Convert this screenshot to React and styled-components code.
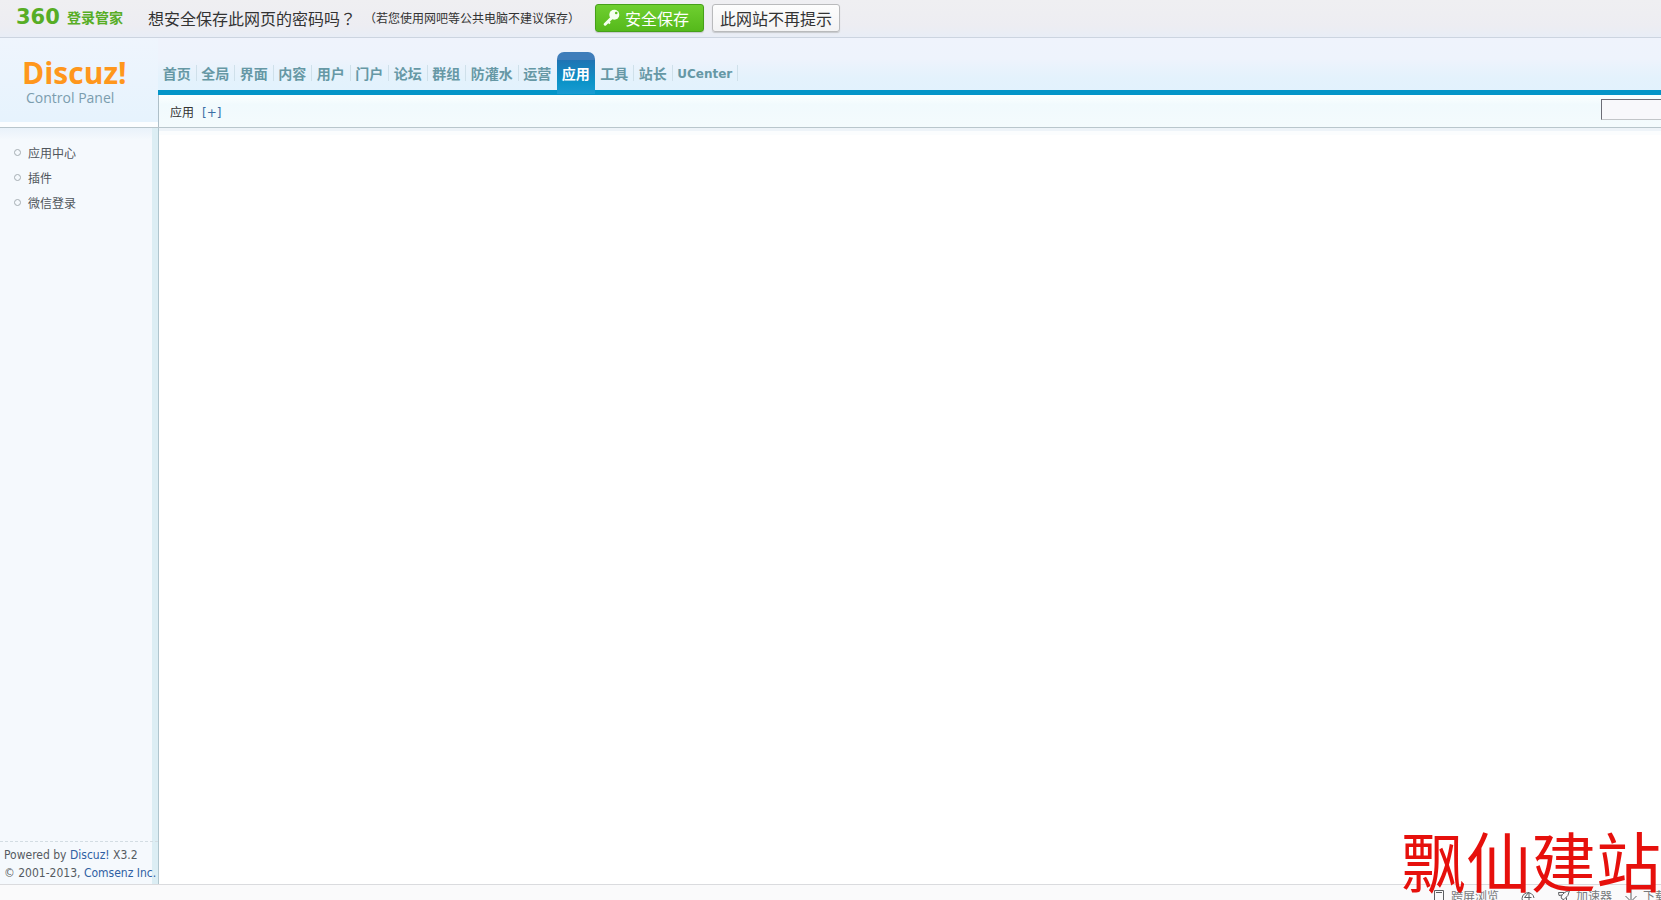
import React from "react";
import styled, { createGlobalStyle } from "styled-components";

const sans = `"DejaVu Sans", "Noto Sans CJK SC", sans-serif`;
const ui = `"DejaVu Sans Condensed", "Noto Sans", "Noto Sans CJK SC", sans-serif`;

const GlobalStyle = createGlobalStyle`
  * { box-sizing: border-box; }
  body {
    margin: 0;
    background: #fff;
    color: #4a4f55;
    font: 12px/18px ${ui};
    overflow: hidden;
  }
  a { text-decoration: none; color: inherit; }
  ul { list-style: none; margin: 0; padding: 0; }
  p { margin: 0; }
`;

const Page = styled.div`
  display: flex;
  flex-direction: column;
  height: 100vh;
  overflow: hidden;
`;

/* password manager bar */
const PromptBar = styled.section`
  display: flex;
  align-items: center;
  flex: none;
  height: 38px;
  padding: 0 16px 2px;
  background: linear-gradient(#efeff2, #ededf2 70%, #e8edf6);
  border-bottom: 1px solid #ccd4e0;
  color: #333;
  font-family: "Noto Sans CJK SC", sans-serif;
`;

const ManagerLogo = styled.div`
  display: flex;
  align-items: center;
  gap: 4px;
  width: 132px;
  margin-bottom: 2px;
  color: #57ad25;
  font-size: 14px;
  font-weight: 700;
`;

const ManagerMark = styled.span`
  width: 47px;
  font: 900 21px/20px "DejaVu Sans", sans-serif;
`;

const Question = styled.span`
  width: 208px;
  font-size: 16px;
  line-height: 24px;
  white-space: nowrap;
`;

const Hint = styled.span`
  margin: 0 15px 0 8px;
  white-space: nowrap;
`;

/* full-width punctuation centred in its cell */
const Mark = styled.span`
  font-family: "Noto Sans CJK TC", sans-serif;
`;

const PromptButton = styled.button`
  display: flex;
  align-items: center;
  gap: 5px;
  height: 28px;
  width: ${(p) => (p.$primary ? 109 : 128)}px;
  margin-right: 8px;
  padding: 0 7px;
  border: 1px solid ${(p) => (p.$primary ? "#46a019" : "#b9babc")};
  border-radius: 3px;
  background: ${(p) =>
    p.$primary ? "linear-gradient(#6fcf30, #55b91b)" : "linear-gradient(#fdfdfd, #f3f3f4)"};
  box-shadow: 0 1px 1px #c6c8cc;
  color: ${(p) => (p.$primary ? "#fff" : "#333")};
  font: 16px/24px "Noto Sans CJK SC", sans-serif;
  white-space: nowrap;
`;

/* header */
const Header = styled.header`
  display: grid;
  grid-template-columns: 158px 1fr;
  flex: none;
  height: 90px;
  border-bottom: 1px solid #b9c6cc;
`;

const Brand = styled.a`
  display: flex;
  flex-direction: column;
  padding: 19px 0 0 22px;
  background: linear-gradient(#eff5fd, #e6f3fd);
  border-bottom: 5px solid #fcfeff;
  font-family: "Open Sans", "Noto Sans", sans-serif;
`;

const BrandName = styled.span`
  color: #ff971c;
  font-size: 30px;
  font-weight: 700;
  line-height: 32px;
`;

const BrandSub = styled.span`
  padding-left: 4px;
  color: #7b9dae;
  font-size: 14px;
  line-height: 18px;
`;

const HeaderMain = styled.div`
  display: flex;
  flex-direction: column;
  min-width: 0;
`;

const TopNav = styled.nav`
  height: 57px;
  padding-top: 14px;
  background: linear-gradient(#eff3fc 0, #eef3fc 40%, #e4f2fc 75%, #e2f2fd);
  border-bottom: 5px solid #0495c8;
`;

const NavList = styled.ul`
  display: flex;
  width: 580px;
`;

const NavItem = styled.li`
  flex: 1 1 auto;
  display: flex;
  align-items: center;
  height: 38px;
`;

const NavLink = styled.a`
  flex: 1;
  align-self: flex-start;
  height: 42px;
  padding: 10px 4px 0;
  border-radius: 7px 7px 0 0;
  background: ${(p) =>
    p.$active ? "linear-gradient(#3f7dba 0 8px, #1f74b4 8px, #0b93c8 30px, #1b9cd2)" : "none"};
  color: ${(p) => (p.$active ? "#fff" : "#6698a5")};
  font: 700 14px/24px ${sans};
  font-size: ${(p) => (p.$latin ? 12 : 14)}px;
  text-align: center;
  white-space: nowrap;
`;

const Divider = styled.span`
  width: 1px;
  height: 16px;
  margin-top: 4px;
  background: ${(p) => (p.$hidden ? "transparent" : "#cfe0ea")};
`;

const SubBar = styled.div`
  display: flex;
  align-items: center;
  flex: 1;
  gap: 8px;
  padding: 4px 0 0 11px;
  border-left: 1px solid #aebfc8;
  background: linear-gradient(#fbffff, #f1fafd 30%, #f4fbfd);
  color: #333;
`;

const AddLink = styled.a`
  color: #3a6ea5;
  font-family: ${sans};
`;

const SearchForm = styled.form`
  align-self: flex-start;
  margin-left: auto;
`;

const SearchInput = styled.input`
  display: block;
  width: 60px;
  height: 21px;
  padding: 0 4px;
  border: solid #6c6c76;
  border-width: 1px 0 1px 1px;
  border-bottom-color: #c2c5c8;
  border-radius: 0;
  background: #f8f8fb;
  font: 12px ${ui};
`;

/* content */
const Body = styled.div`
  display: grid;
  grid-template-columns: 159px 1fr;
  flex: 1;
  min-height: 0;
`;

const Sidebar = styled.aside`
  display: flex;
  flex-direction: column;
  justify-content: space-between;
  background: linear-gradient(90deg, transparent 0 152px, #dceef4 152px), linear-gradient(#e9f2fa, #f5f9fd 12px);
  border-right: 1px solid #b0c6ce;
`;

const SideLink = styled.a`
  display: flex;
  align-items: center;
  gap: 7px;
  height: 25px;
  padding-left: 14px;
  color: #50565c;

  &::before {
    content: "";
    box-sizing: border-box;
    width: 7px;
    height: 7px;
    margin-bottom: 3px;
    border: 1px solid #a5aeb3;
    border-radius: 50%;
  }
`;

const SideList = styled.ul`
  padding-top: 13px;
`;

const Copyright = styled.footer`
  padding: 4px 0 2px 4px;
  border-top: 1px dashed #d3dde3;
  color: #555b61;
  white-space: nowrap;

  a { color: #2f60a3; }
`;

const Main = styled.main`
  background: linear-gradient(#eef4f9 0 3px, #fbfdfe 3px 7px, #fff 7px);
`;

const StatusBar = styled.footer`
  display: flex;
  justify-content: flex-end;
  flex: none;
  height: 16px;
  padding-top: 3px;
  overflow: hidden;
  border-top: 1px solid #dadbde;
  background: #fafafb;
  color: #77797c;
`;

const StatusItem = styled.span`
  display: flex;
  flex: none;
  gap: 5px;
  width: ${(p) => p.$width}px;
  line-height: 18px;
  white-space: nowrap;

  svg { flex: none; margin-top: 1px; }
`;

const Watermark = styled.div`
  position: fixed;
  right: 0;
  bottom: 6px;
  color: #e6100c;
  font: 400 65px/70px "KaiTi", "Noto Sans CJK SC", sans-serif;
  pointer-events: none;
`;

const Icon = ({ children }) => (
  <svg width="14" height="14" viewBox="0 0 14 14" fill="none" stroke="#5d5f62" strokeWidth="1" aria-hidden="true">
    {children}
  </svg>
);

const KeyIcon = () => (
  <svg width="17" height="17" viewBox="0 0 17 17" aria-hidden="true">
    <path d="M9 8.5 2.2 15.2" stroke="#f5fff0" strokeWidth="3" strokeLinecap="round" />
    <path d="M5 12.5 7 14.5" stroke="#f5fff0" strokeWidth="2" />
    <circle cx="11.3" cy="5.7" r="5" fill="#f5fff0" />
    <circle cx="13.2" cy="4" r="1.3" fill="#5fbe25" />
  </svg>
);

const NAV = ["首页", "全局", "界面", "内容", "用户", "门户", "论坛", "群组", "防灌水", "运营", "应用", "工具", "站长", "UCenter"];
const SIDE = ["应用中心", "插件", "微信登录"];
const ACTIVE = "应用";

export default function App() {
  return (
    <Page lang="zh-CN">
      <GlobalStyle />
      <PromptBar>
        <ManagerLogo>
          <ManagerMark>360</ManagerMark>登录管家
        </ManagerLogo>
        <Question>
          想安全保存此网页的密码吗<Mark lang="zh-TW">？</Mark>
        </Question>
        <Hint>
          （若您使用网吧等公共电脑不建议保存<Mark lang="zh-TW">）</Mark>
        </Hint>
        <PromptButton type="button" $primary>
          <KeyIcon />
          安全保存
        </PromptButton>
        <PromptButton type="button">此网站不再提示</PromptButton>
      </PromptBar>

      <Header>
        <Brand href="#">
          <BrandName>Discuz!</BrandName>
          <BrandSub>Control Panel</BrandSub>
        </Brand>
        <HeaderMain>
          <TopNav>
            <NavList>
              {NAV.map((name, i) => (
                <NavItem key={name}>
                  <NavLink href="#" $active={name === ACTIVE} $latin={name === "UCenter"}>
                    {name}
                  </NavLink>
                  <Divider $hidden={name === ACTIVE || NAV[i + 1] === ACTIVE} />
                </NavItem>
              ))}
            </NavList>
          </TopNav>
          <SubBar>
            <span>应用</span>
            <AddLink href="#">[+]</AddLink>
            <SearchForm>
              <SearchInput type="text" aria-label="搜索" />
            </SearchForm>
          </SubBar>
        </HeaderMain>
      </Header>

      <Body>
        <Sidebar>
          <SideList>
            {SIDE.map((name) => (
              <li key={name}>
                <SideLink href="#">{name}</SideLink>
              </li>
            ))}
          </SideList>
          <Copyright>
            <p>Powered by <a href="#">Discuz!</a> X3.2</p>
            <p>© 2001-2013, <a href="#">Comsenz Inc.</a></p>
          </Copyright>
        </Sidebar>
        <Main />
      </Body>

      <StatusBar>
        <StatusItem $width={89}>
          <Icon>
            <path d="M2.5 1.5h9v12h-9zM4 3.5h6" />
          </Icon>
          跨屏浏览
        </StatusItem>
        <StatusItem $width={36}>
          <Icon>
            <path d="M1.500 12A6 6 0 1 1 13 9M8 3 3.500 8.500h7M8 4v8" />
          </Icon>
        </StatusItem>
        <StatusItem $width={67}>
          <Icon>
            <path d="M5 10 4 8Q6 3 12.5 1.5 12 7 7 10.500zM5 6 2 6.500 1.500 3.500 7 3.500M9.500 8.500v3L7 13.500" />
          </Icon>
          加速器
        </StatusItem>
        <StatusItem $width={37}>
          <Icon>
            <path d="M7 0v13M1.500 7 7 12.500 12.500 7" />
          </Icon>
          下载
        </StatusItem>
      </StatusBar>
      <Watermark>飘仙建站</Watermark>
    </Page>
  );
}
